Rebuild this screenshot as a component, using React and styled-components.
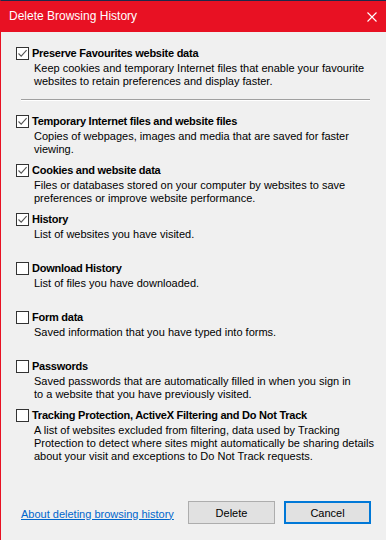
import styled, { createGlobalStyle } from "styled-components";

const GlobalStyle = createGlobalStyle`
  html, body {
    margin: 0;
    padding: 0;
    background: #f0f0f0;
  }
  body {
    font-family: "Segoe UI", "Liberation Sans", Arial, sans-serif;
    font-size: 11px;
    color: #000;
  }
`;

// each description is split where the dialog wraps it
const preserveItem = {
  label: "Preserve Favourites website data",
  lines: [
    "Keep cookies and temporary Internet files that enable your favourite",
    "websites to retain preferences and display faster.",
  ],
  checked: true,
};

const items = [
  {
    label: "Temporary Internet files and website files",
    lines: ["Copies of webpages, images and media that are saved for faster", "viewing."],
    checked: true,
  },
  {
    label: "Cookies and website data",
    lines: [
      "Files or databases stored on your computer by websites to save",
      "preferences or improve website performance.",
    ],
    checked: true,
  },
  {
    label: "History",
    lines: ["List of websites you have visited."],
    checked: true,
  },
  {
    label: "Download History",
    lines: ["List of files you have downloaded."],
    checked: false,
  },
  {
    label: "Form data",
    lines: ["Saved information that you have typed into forms."],
    checked: false,
  },
  {
    label: "Passwords",
    lines: [
      "Saved passwords that are automatically filled in when you sign in",
      "to a website that you have previously visited.",
    ],
    checked: false,
  },
  {
    label: "Tracking Protection, ActiveX Filtering and Do Not Track",
    lines: [
      "A list of websites excluded from filtering, data used by Tracking",
      "Protection to detect where sites might automatically be sharing details",
      "about your visit and exceptions to Do Not Track requests.",
    ],
    checked: false,
  },
];

const CheckMark = () => (
  <svg width="11" height="11" viewBox="0 0 11 11">
    <path d="M1.5 5.5 L4.2 8.2 L9.6 2.2" fill="none" stroke="#555" strokeWidth="1.1" />
  </svg>
);

const Option = ({ item }) => (
  <OptionRow>
    <Box>{item.checked && <CheckMark />}</Box>
    <OptionLabel>{item.label}</OptionLabel>
    <OptionText>
      {item.lines.map((line, i) => (
        <Line key={i}>{line}</Line>
      ))}
    </OptionText>
  </OptionRow>
);

const App = () => {
  return (
    <>
      <GlobalStyle />
      <Window>
        <TitleBar>
          <Title>Delete Browsing History</Title>
          <CloseButton>
            <svg width="10" height="10" viewBox="0 0 10 10">
              <path d="M0.5 0.5 L9.5 9.5 M9.5 0.5 L0.5 9.5" stroke="#fff" strokeWidth="1.1" />
            </svg>
          </CloseButton>
        </TitleBar>
        <Body>
          <Option item={preserveItem} />
          <Separator />
          <OptionList>
            {items.map((item, i) => (
              <Option key={i} item={item} />
            ))}
          </OptionList>
          <Footer>
            <HelpLink href="#">About deleting browsing history</HelpLink>
            <Button>Delete</Button>
            <Button $primary>Cancel</Button>
          </Footer>
        </Body>
      </Window>
    </>
  );
};

export default App;

/* =========================
   Styled Components
   ========================= */

const Window = styled.div`
  width: 386px;
  height: 540px;
  box-sizing: border-box;
  border-top: 1px solid #1b2a4a;
  border-left: 1px solid #e81123;
  display: flex;
  flex-direction: column;
  background: #f0f0f0;
  overflow: hidden;
`;

const TitleBar = styled.div`
  height: 31px;
  flex: 0 0 31px;
  background: #e81123;
  display: flex;
  align-items: center;
  justify-content: space-between;
  padding: 0 9px 0 8px;
`;

const Title = styled.span`
  color: #fff;
  font-size: 12px;
  padding-bottom: 1px;
`;

const CloseButton = styled.span`
  display: flex;
  width: 10px;
  height: 10px;
`;

const Body = styled.div`
  flex: 1;
  display: flex;
  flex-direction: column;
  padding: 14px 15px 0 15px;
`;

const OptionList = styled.div`
  display: flex;
  flex-direction: column;
  margin-top: 13px;
`;

const OptionRow = styled.div`
  display: grid;
  grid-template-columns: 13px 1fr;
  column-gap: 3px;
  height: 49px;
  align-content: start;
`;

const Box = styled.span`
  width: 13px;
  height: 13px;
  box-sizing: border-box;
  border: 1px solid #333;
  background: #fff;
  display: flex;
  align-items: center;
  justify-content: center;
  margin-top: 1px;
`;

const OptionLabel = styled.span`
  font-weight: 700;
  font-size: 11px;
  letter-spacing: -0.25px;
  line-height: 15px;
`;

const OptionText = styled.div`
  grid-column: 2;
  margin: 1px 0 0 2px;
  font-size: 11px;
  line-height: 13px;
`;

const Line = styled.div`
  white-space: nowrap;
`;

const Separator = styled.div`
  height: 1px;
  margin: 4px 0 0 5px;
  width: 349px;
  background: #a0a0a0;
  border-bottom: 1px solid #fff;
`;

const Footer = styled.div`
  display: flex;
  align-items: center;
  margin-top: auto;
  padding: 0 0 16px 5px;
`;

const HelpLink = styled.a`
  color: #0066cc;
  text-decoration: underline;
  font-size: 11px;
  white-space: nowrap;
  margin-right: auto;
  padding-top: 2px;
`;

const Button = styled.button`
  width: 87px;
  height: 23px;
  flex: 0 0 87px;
  box-sizing: border-box;
  margin-left: 9px;
  font-family: inherit;
  font-size: 11px;
  color: #000;
  background: #e1e1e1;
  border: ${({ $primary }) => ($primary ? "2px solid #0078d7" : "1px solid #adadad")};
  padding: 0;
`;
